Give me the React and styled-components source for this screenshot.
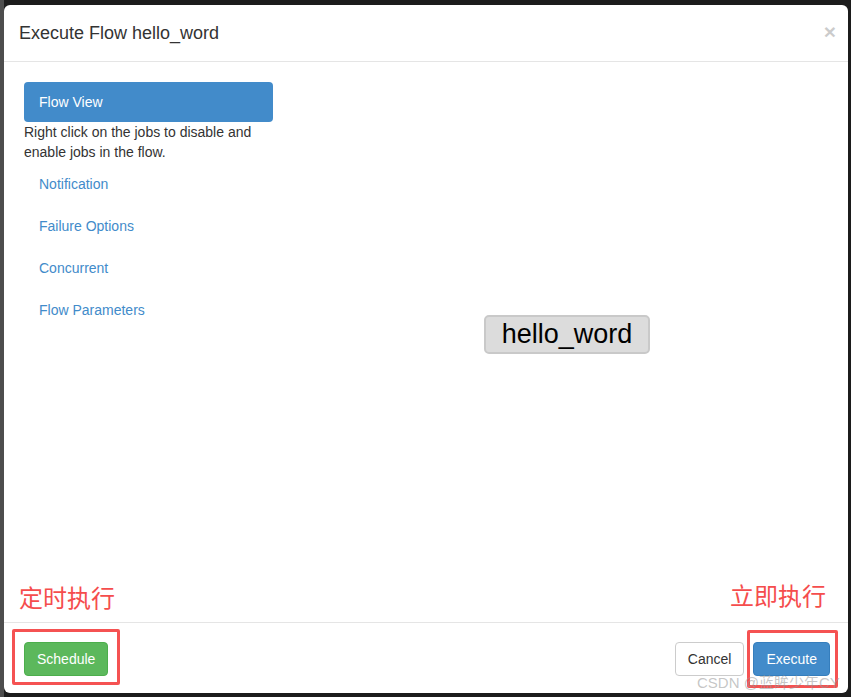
import styled, { createGlobalStyle } from 'styled-components';

const GlobalStyle = createGlobalStyle`
    html, body {
        margin: 0;
        padding: 0;
    }
    body {
        font-family: "Liberation Sans", Arial, sans-serif;
        font-size: 14px;
        color: #333;
        background: linear-gradient(to right, #4d4d4d 4px, #1c1c1c 4px);
    }
    * {
        box-sizing: border-box;
    }
`;

const Backdrop = styled.div`
    height: 697px;
    padding: 5px 3px 4px 4px;
`;

const Modal = styled.div`
    position: relative;
    height: 688px;
    background: #fff;
    border-radius: 6px;
    display: flex;
    flex-direction: column;
    overflow: hidden;
`;

const Header = styled.div`
    height: 57px;
    padding: 0 12px 0 15px;
    display: flex;
    align-items: center;
    justify-content: space-between;
    border-bottom: 1px solid #e5e5e5;
`;

const Title = styled.h4`
    margin: 0;
    font-size: 18px;
    font-weight: 400;
    color: #333;
`;

const Close = styled.span`
    font-size: 21px;
    font-weight: 700;
    color: #000;
    opacity: 0.2;
    line-height: 1;
    margin: -4px 0 0;
`;

const Body = styled.div`
    flex: 1;
    padding: 20px;
    display: flex;
`;

const Sidebar = styled.ul`
    width: 249px;
    margin: 0;
    padding: 0;
    list-style: none;
`;

const Pill = styled.li`
    margin-top: ${(p) => (p.$first ? '0' : '2px')};
    padding: 10px 15px;
    line-height: 20px;
    border-radius: 4px;
    color: ${(p) => (p.$active ? '#fff' : '#428bca')};
    background: ${(p) => (p.$active ? '#428bca' : 'transparent')};
`;

const Help = styled.p`
    margin: 0;
    line-height: 20px;
    color: #333;
`;

const Canvas = styled.div`
    position: relative;
    flex: 1;
`;

const Node = styled.div`
    position: absolute;
    left: 211px;
    top: 233px;
    width: 166px;
    height: 39px;
    display: flex;
    align-items: center;
    justify-content: center;
    background: #dcdcdc;
    border: 2px solid #c9c9c9;
    border-radius: 5px;
    font-size: 27px;
    color: #000;
`;

const Footer = styled.div`
    height: 71px;
    border-top: 1px solid #e5e5e5;
    padding: 19px 18px 0 20px;
    display: flex;
    align-items: flex-start;
`;

const Spacer = styled.div`
    flex: 1;
`;

const Button = styled.button`
    font-family: inherit;
    font-size: 14px;
    line-height: 20px;
    height: 34px;
    padding: 6px 12px;
    border-radius: 4px;
    border: 1px solid ${(p) => p.$border};
    background: ${(p) => p.$bg};
    color: ${(p) => p.$color};
    margin-left: ${(p) => p.$gap || 0};
`;

const Note = styled.span`
    position: absolute;
    left: ${(p) => p.$left}px;
    top: ${(p) => p.$top}px;
    font-family: "Noto Sans CJK SC", sans-serif;
    font-size: 24px;
    line-height: 30px;
    color: #f54d4d;
`;

const Frame = styled.div`
    position: absolute;
    left: ${(p) => p.$left}px;
    top: ${(p) => p.$top}px;
    width: ${(p) => p.$w}px;
    height: ${(p) => p.$h}px;
    border: 3px solid #f55252;
    border-radius: 2px;
`;

const Watermark = styled.span`
    position: absolute;
    left: 693px;
    top: 668px;
    font-family: "Liberation Sans", "Noto Sans CJK SC", sans-serif;
    font-size: 15px;
    line-height: 20px;
    color: rgba(150, 150, 150, 0.55);
    white-space: nowrap;
`;

const links = ['Notification', 'Failure Options', 'Concurrent', 'Flow Parameters'];

const App = () => {
    return (
        <Backdrop>
            <GlobalStyle />
            <Modal>
                <Header>
                    <Title>Execute Flow hello_word</Title>
                    <Close>×</Close>
                </Header>
                <Body>
                    <Sidebar>
                        <Pill $first $active>Flow View</Pill>
                        <Help>
                            Right click on the jobs to disable and
                            <br />
                            enable jobs in the flow.
                        </Help>
                        {links.map((l) => (
                            <Pill key={l}>{l}</Pill>
                        ))}
                    </Sidebar>
                    <Canvas>
                        <Node>hello_word</Node>
                    </Canvas>
                </Body>
                <Footer>
                    <Button $bg="#5cb85c" $border="#4cae4c" $color="#fff">Schedule</Button>
                    <Spacer />
                    <Button $bg="#fff" $border="#ccc" $color="#333">Cancel</Button>
                    <Button $bg="#428bca" $border="#357ebd" $color="#fff" $gap="9px">Execute</Button>
                </Footer>
                <Note $left={15} $top={577}>定时执行</Note>
                <Note $left={726} $top={575}>立即执行</Note>
                <Frame $left={8} $top={624} $w={108} $h={56} />
                <Frame $left={743} $top={625} $w={91} $h={58} />
                <Watermark>CSDN @蓝眸少年CY</Watermark>
            </Modal>
        </Backdrop>
    );
};

export default App;
